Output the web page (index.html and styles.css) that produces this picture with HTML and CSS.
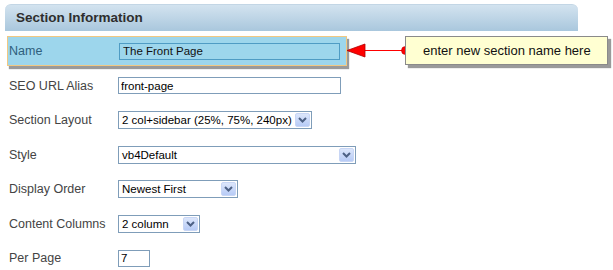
FILE: index.html
```html
<!DOCTYPE html>
<html lang="en">
<head>
  <meta charset="UTF-8">
  <title>Section Information</title>
  <link rel="stylesheet" href="styles.css">
</head>
<body>
<div class="panel">
  <div class="panel-head">Section Information</div>

  <div class="rows">
    <div class="row active">
      <label>Name</label>
      <input class="field name-field" type="text" value="The Front Page">
    </div>
    <div class="row">
      <label>SEO URL Alias</label>
      <input class="field seo-field" type="text" value="front-page">
    </div>
    <div class="row">
      <label>Section Layout</label>
      <div class="select w-layout"><span>2 col+sidebar (25%, 75%, 240px)</span><span class="drop"><svg width="9" height="6" viewBox="0 0 9 6"><path d="M1 1 L4.5 4.5 L8 1" fill="none" stroke="#4d6185" stroke-width="2"/></svg></span></div>
    </div>
    <div class="row">
      <label>Style</label>
      <div class="select w-style"><span>vb4Default</span><span class="drop"><svg width="9" height="6" viewBox="0 0 9 6"><path d="M1 1 L4.5 4.5 L8 1" fill="none" stroke="#4d6185" stroke-width="2"/></svg></span></div>
    </div>
    <div class="row">
      <label>Display Order</label>
      <div class="select w-order"><span>Newest First</span><span class="drop"><svg width="9" height="6" viewBox="0 0 9 6"><path d="M1 1 L4.5 4.5 L8 1" fill="none" stroke="#4d6185" stroke-width="2"/></svg></span></div>
    </div>
    <div class="row">
      <label>Content Columns</label>
      <div class="select w-cols"><span>2 column</span><span class="drop"><svg width="9" height="6" viewBox="0 0 9 6"><path d="M1 1 L4.5 4.5 L8 1" fill="none" stroke="#4d6185" stroke-width="2"/></svg></span></div>
    </div>
    <div class="row">
      <label>Per Page</label>
      <input class="field page-field" type="text" value="7">
    </div>
  </div>

  <!-- annotation -->
  <svg class="pointer" width="64" height="20" viewBox="0 0 64 20">
    <line x1="18" y1="9.5" x2="60" y2="9.5" stroke="#ff0000" stroke-width="1.2"/>
    <polygon points="1,9.5 19,3 19,16" fill="#ff0000" stroke="#b00000" stroke-width="0.8"/>
    <circle cx="59.5" cy="9.5" r="4" fill="#ff0000" stroke="#c00000" stroke-width="0.6"/>
  </svg>
  <div class="callout">enter new section name here</div>
</div>
</body>
</html>
```

FILE: styles.css
```css
* { margin: 0; padding: 0; box-sizing: border-box; }
body { background: #fff; font-family: 'Liberation Sans', Arial, sans-serif; color: #333; }

.panel {
  position: relative;
  width: 613px;
  height: 270px;
  padding: 4px 0 0 5px;
}

/* Header bar */
.panel-head {
  width: 573px;
  height: 27px;
  border-radius: 6px 6px 0 0;
  background: linear-gradient(#d3e3ef, #a9c7dd);
  border-top: 1px solid #c3d6e5;
  padding-left: 11px;
  font-size: 13.5px;
  font-weight: bold;
  line-height: 26px;
  color: #2e2e2e;
}

/* Form rows */
.rows {
  display: flex;
  flex-direction: column;
  gap: 4.5px;
  margin-top: 5px;
  padding-left: 2px;
}
.row {
  display: flex;
  align-items: center;
  width: 340px;
  height: 30px;
  border: 1px solid transparent;
}
.row label {
  flex-shrink: 0;
  width: 110px;
  padding-left: 1px;
  font-size: 12.5px;
  color: #444;
}
.row.active {
  background: #9dd6ec;
  border-color: #f0c882;
  box-shadow: 2px 3px 1px #9a9a9a;
}
.row.active label { color: #2f5f7c; }

.field {
  flex-shrink: 0;
  height: 17px;
  border: 1px solid #7f9db9;
  background: #fff;
  font-family: 'Liberation Sans', Arial, sans-serif;
  font-size: 11.5px;
  color: #000;
  padding: 0 2px;
  outline: none;
}
.name-field {
  width: 221px;
  margin-left: 1px;
  background: #9dd6ec;
  border-color: #4f9cc4;
  padding-left: 3px;
  color: #111;
}
.seo-field { width: 223px; }
.page-field { width: 32px; }

/* Drop-downs */
.select {
  flex-shrink: 0;
  display: flex;
  align-items: center;
  justify-content: space-between;
  height: 18px;
  border: 1px solid #7f9db9;
  background: #fff;
  font-size: 11.5px;
  color: #000;
  padding: 0 1px 0 3px;
  white-space: nowrap;
}
.drop {
  display: flex;
  align-items: center;
  justify-content: center;
  width: 15px;
  height: 14px;
  border: 1px solid #c8d6f5;
  border-radius: 2px;
  background: linear-gradient(#dce6fb, #b7cbf6);
}
.w-layout { width: 194px; }
.w-style { width: 238px; }
.w-order { width: 120px; }
.w-cols { width: 82px; }

/* Annotation overlay */
.pointer {
  position: absolute;
  left: 346px;
  top: 41px;
}
.callout {
  position: absolute;
  left: 405px;
  top: 36px;
  width: 203px;
  height: 29px;
  background: #ffffd2;
  border: 1px solid #8a8a8a;
  box-shadow: 3px 3px 1px #9a9a9a;
  padding-left: 17px;
  font-size: 13px;
  line-height: 27px;
  color: #111;
}
```
